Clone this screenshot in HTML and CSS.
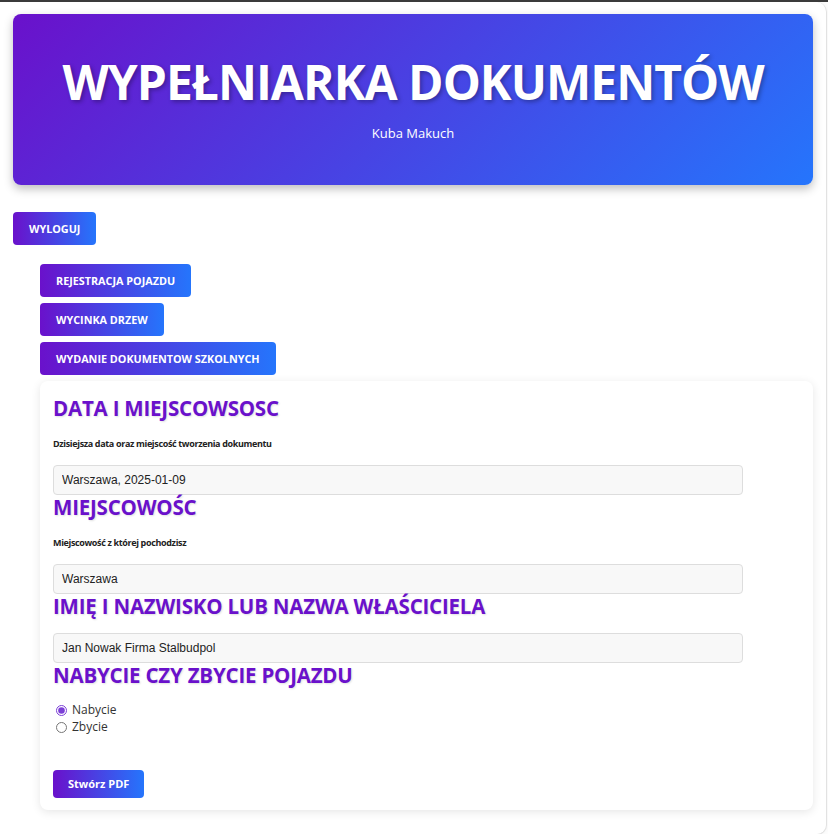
FILE: index.html
```html
<!DOCTYPE html>
<html lang="pl">
<head>
<meta charset="utf-8">
<title>Wypełniarka dokumentów</title>
<link rel="stylesheet" href="styles.css">
</head>
<body>
<div class="page">
  <header class="hero">
    <h1 class="hero-title">WYPEŁNIARKA DOKUMENTÓW</h1>
    <p class="hero-sub">Kuba Makuch</p>
  </header>

  <div class="top-actions">
    <button class="btn">WYLOGUJ</button>
  </div>

  <section class="content">
    <nav class="doc-nav">
      <button class="btn">REJESTRACJA POJAZDU</button>
      <button class="btn">WYCINKA DRZEW</button>
      <button class="btn">WYDANIE DOKUMENTOW SZKOLNYCH</button>
    </nav>

    <form class="card">
      <h2 class="section-title">DATA I MIEJSCOWSOSC</h2>
      <label class="field-label">Dzisiejsza data oraz miejscość tworzenia dokumentu</label>
      <input class="field" type="text" value="Warszawa, 2025-01-09">

      <h2 class="section-title">MIEJSCOWOŚC</h2>
      <label class="field-label">Miejscowość z której pochodzisz</label>
      <input class="field" type="text" value="Warszawa">

      <h2 class="section-title">IMIĘ I NAZWISKO LUB NAZWA WŁAŚCICIELA</h2>
      <input class="field field-tight" type="text" value="Jan Nowak Firma Stalbudpol">

      <h2 class="section-title">NABYCIE CZY ZBYCIE POJAZDU</h2>
      <div class="radios">
        <label class="radio"><input type="radio" name="typ" checked> Nabycie</label>
        <label class="radio"><input type="radio" name="typ"> Zbycie</label>
      </div>

      <button type="button" class="btn btn-submit">Stwórz PDF</button>
    </form>
  </section>
</div>
</body>
</html>
```

FILE: styles.css
```css
html, body {
  margin: 0;
  padding: 0;
  background: #ffffff;
}

body {
  border-top: 2px solid #3b3b3b;
  font-family: "Open Sans", "Noto Sans", sans-serif;
  height: 834px;
  box-sizing: border-box;
  overflow: hidden;
}

.page {
  box-sizing: border-box;
  width: 827px;
  height: 833px;
  background: #ffffff;
  border: 1px solid #e2e2e2;
  border-left: none;
  border-top: none;
  border-radius: 0 10px 10px 0;
  box-shadow: 0 0 10px rgba(0, 0, 0, 0.06);
  padding: 12px 13px 0 13px;
}

.hero {
  background: linear-gradient(135deg, #6a11cb 0%, #2575fc 100%);
  border-radius: 8px;
  box-shadow: 0 4px 10px rgba(0, 0, 0, 0.25);
  padding: 38px 20px 42px;
  text-align: center;
  color: #ffffff;
}

.hero-title {
  margin: 0;
  font-size: 48px;
  line-height: 60px;
  font-weight: 700;
  letter-spacing: -1px;
  text-shadow: 2px 2px 4px rgba(0, 0, 0, 0.3);
}

.hero-sub {
  margin: 11px 0 0;
  font-size: 13px;
  line-height: 20px;
}

.btn {
  display: inline-block;
  border: none;
  border-radius: 4px;
  background: linear-gradient(90deg, #6a11cb 0%, #2575fc 100%);
  color: #ffffff;
  font-family: "Open Sans", "Noto Sans", sans-serif;
  font-weight: 700;
  font-size: 10.8px;
  line-height: 13px;
  padding: 10px 16px;
  cursor: pointer;
}

.top-actions {
  margin-top: 27px;
}

.content {
  margin: 19px 0 0 27px;
}

.doc-nav {
  display: flex;
  flex-direction: column;
  align-items: flex-start;
  gap: 6px;
}

.card {
  margin-top: 6px;
  background: #ffffff;
  border-radius: 8px;
  box-shadow: 0 2px 10px rgba(0, 0, 0, 0.1);
  padding: 15px 13px 12px;
}

.section-title {
  margin: 0;
  color: #6a11cb;
  font-size: 20.5px;
  line-height: 24px;
  font-weight: 700;
  letter-spacing: -0.2px;
  text-shadow: 1px 1px 2px rgba(0, 0, 0, 0.12);
}

.field-label {
  display: block;
  margin: 15px 0 13px;
  font-size: 9px;
  line-height: 17px;
  font-weight: 700;
  letter-spacing: -0.35px;
  color: #222222;
}

.field {
  display: block;
  box-sizing: border-box;
  width: 690px;
  height: 30px;
  margin: 0;
  padding: 0 8px;
  border: 1px solid #dddddd;
  border-radius: 4px;
  background: #f8f8f8;
  font-family: "Liberation Sans", Arial, sans-serif;
  font-size: 12px;
  color: #222222;
}

.field-tight {
  margin-top: 15px;
}

.radios {
  margin-top: 15px;
  display: flex;
  flex-direction: column;
  gap: 1px;
}

.radio {
  display: flex;
  align-items: center;
  gap: 5px;
  font-size: 12px;
  line-height: 16px;
  color: #333333;
}

.radio input {
  margin: 0 0 0 3px;
  width: 11px;
  height: 11px;
  accent-color: #7b3fd6;
}

.btn-submit {
  margin-top: 35px;
  font-size: 11px;
  line-height: 16px;
  padding: 6px 15px;
}
```
